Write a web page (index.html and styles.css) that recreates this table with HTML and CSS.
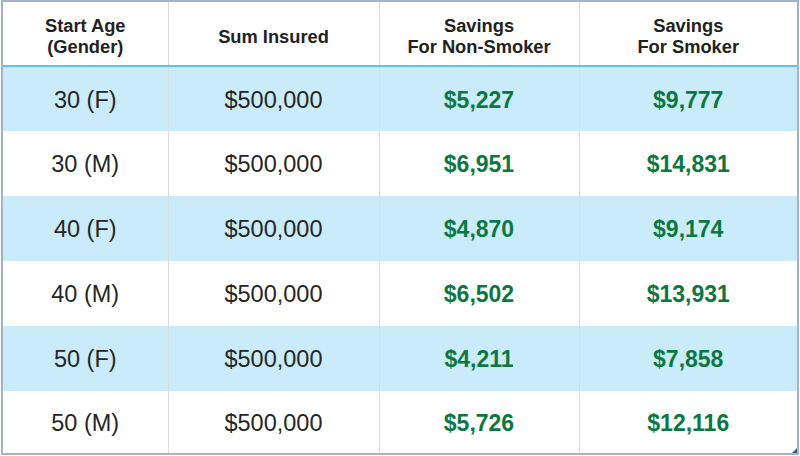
FILE: index.html
```html
<!DOCTYPE html>
<html>
<head>
<meta charset="utf-8">
<link rel="stylesheet" href="styles.css">
</head>
<body>
<div class="frame">
  <table class="rates">
    <colgroup>
      <col class="c1"><col class="c2"><col class="c3"><col class="c4">
    </colgroup>
    <thead>
      <tr>
        <th>Start Age<br>(Gender)</th>
        <th>Sum Insured</th>
        <th>Savings<br>For Non-Smoker</th>
        <th>Savings<br>For Smoker</th>
      </tr>
    </thead>
    <tbody>
      <tr class="alt r1"><td>30 (F)</td><td>$500,000</td><td class="g">$5,227</td><td class="g">$9,777</td></tr>
      <tr><td>30 (M)</td><td>$500,000</td><td class="g">$6,951</td><td class="g">$14,831</td></tr>
      <tr class="alt"><td>40 (F)</td><td>$500,000</td><td class="g">$4,870</td><td class="g">$9,174</td></tr>
      <tr><td>40 (M)</td><td>$500,000</td><td class="g">$6,502</td><td class="g">$13,931</td></tr>
      <tr class="alt"><td>50 (F)</td><td>$500,000</td><td class="g">$4,211</td><td class="g">$7,858</td></tr>
      <tr class="last"><td>50 (M)</td><td>$500,000</td><td class="g">$5,726</td><td class="g">$12,116</td></tr>
    </tbody>
  </table>
  <span class="grip"></span>
</div>
</body>
</html>
```

FILE: styles.css
```css
html, body {
  margin: 0;
  padding: 0;
  background: #ffffff;
}

.frame {
  position: relative;
  margin-left: 1px;
  width: 798px;
  height: 455px;
  box-sizing: border-box;
  border: 2px solid #a3b3cb;
  background: #ffffff;
  overflow: hidden;
}

.rates {
  width: 100%;
  border-collapse: collapse;
  table-layout: fixed;
  font-family: "Liberation Sans", Arial, sans-serif;
}

.c1 { width: 165px; }
.c2 { width: 211px; }
.c3 { width: 200px; }

.rates th,
.rates td {
  padding: 0;
  text-align: center;
  vertical-align: middle;
  border-left: 1px solid #dcdcdc;
}

.rates th:first-child,
.rates td:first-child {
  border-left: none;
}

.rates th {
  height: 64px;
  font-size: 18.3px;
  line-height: 21px;
  font-weight: bold;
  color: #222222;
  border-bottom: 2px solid #5ec3ea;
  padding-top: 5px;
  box-sizing: border-box;
}

.rates td {
  height: 65px;
  font-size: 23.5px;
  color: #262626;
  padding-top: 2px;
  box-sizing: border-box;
}

.rates tr.r1 td { height: 65px; }
.rates tr.last td { height: 63px; }

.rates tr.alt td {
  background: #c9ebfa;
}

.rates td.g {
  color: #0b7842;
  font-weight: bold;
  font-size: 23px;
}

.grip {
  position: absolute;
  right: 0;
  bottom: 0;
  width: 0;
  height: 0;
  border-left: 5px solid transparent;
  border-bottom: 5px solid #3a5a9a;
}
```
